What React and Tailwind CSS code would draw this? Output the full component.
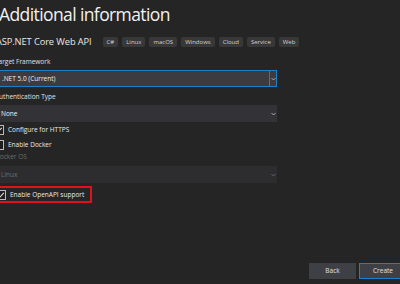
import React from "react";

const font = { fontFamily: '"Open Sans", "Noto Sans", sans-serif' };

function Tag({ children }) {
  return (
    <span className="h-[10px] px-[4px] rounded-[2px] bg-[#383838] text-[6px] leading-[10px] text-[#d0d0d0]">
      {children}
    </span>
  );
}

function Arrow({ dim }) {
  return (
    <svg width="5" height="4" viewBox="0 0 5 4">
      <path d="M0.5 1 L2.5 3 L4.5 1" fill="none" stroke={dim ? "#666" : "#aaa"} strokeWidth="1" />
    </svg>
  );
}

function Check({ checked }) {
  return (
    <span className="w-[10px] h-[10px] border border-[#bbb] bg-[#1e1e1e] flex items-center justify-center shrink-0">
      {checked && (
        <svg width="8" height="8" viewBox="0 0 8 8">
          <path d="M1.2 4.2 L3 6 L6.8 1.8" fill="none" stroke="#ddd" strokeWidth="1.1" />
        </svg>
      )}
    </span>
  );
}

export default function App() {
  return (
    <div className="w-[400px] h-[284px] bg-[#252526] overflow-hidden relative text-[#e0e0e0]" style={font}>
      <div className="-ml-[7px] flex flex-col">
        <div className="ml-[6px] mt-[1px] h-[26px] text-[17.5px] leading-[26px] tracking-[-0.6px] text-[#f2f2f2]">
          Additional information
        </div>
        <div className="mt-[9px] h-[12px] flex items-center gap-[4px]">
          <span className="ml-[3px] text-[9.3px] leading-[12px] tracking-[-0.1px] text-[#e8e8e8] mr-[7px]">ASP.NET Core Web API</span>
          <Tag>C#</Tag>
          <Tag>Linux</Tag>
          <Tag>macOS</Tag>
          <Tag>Windows</Tag>
          <Tag>Cloud</Tag>
          <Tag>Service</Tag>
          <Tag>Web</Tag>
        </div>
        <div className="mt-[9px] ml-[2px] text-[6.5px] leading-[10px] text-[#e0e0e0]">Target Framework</div>
        <div className="mt-[3px] w-[284px] h-[17px] border border-[#1b7fc9] bg-[#3b3b40] flex items-center">
          <span className="flex-1 pl-[8px] text-[6.5px] text-[#f0f0f0]">.NET 5.0 (Current)</span>
          <span className="w-[7px] h-full border-l border-[#1b7fc9] flex items-center justify-center">
            <Arrow />
          </span>
        </div>
        <div className="mt-[5px] ml-[2px] text-[6.5px] leading-[10px] text-[#e0e0e0]">Authentication Type</div>
        <div className="mt-[3px] w-[284px] h-[17px] bg-[#333337] flex items-center">
          <span className="flex-1 pl-[8px] text-[6.5px] text-[#f0f0f0]">None</span>
          <span className="w-[7px] flex items-center justify-center"><Arrow /></span>
        </div>
        <div className="mt-[3px] h-[10px] flex items-center gap-[4px] pl-[1px]">
          <Check checked />
          <span className="text-[6.5px] text-[#e8e8e8]">Configure for HTTPS</span>
        </div>
        <div className="mt-[5px] h-[10px] flex items-center gap-[4px] pl-[1px]">
          <Check />
          <span className="text-[6.5px] text-[#e8e8e8]">Enable Docker</span>
        </div>
        <div className="mt-[2px] ml-[2px] text-[6.5px] leading-[10px] text-[#6d6d6d]">Docker OS</div>
        <div className="mt-[4px] w-[284px] h-[17px] bg-[#2d2d30] flex items-center">
          <span className="flex-1 pl-[8px] text-[6.5px] text-[#6d6d6d]">Linux</span>
          <span className="w-[7px] flex items-center justify-center"><Arrow dim /></span>
        </div>
        <div className="mt-[3px] w-[99px] h-[17px] border-2 border-[#e0101f] flex items-center gap-[4px] pl-[1px]">
          <Check checked />
          <span className="text-[6.5px] text-[#e8e8e8]">Enable OpenAPI support</span>
        </div>
      </div>
      <div className="absolute right-[-7px] bottom-[5px] flex gap-[3px]">
        <button className="w-[47px] h-[16px] bg-[#3f3f46] text-[6.5px] text-[#e0e0e0]">Back</button>
        <button className="w-[48px] h-[16px] bg-[#3f3f46] border border-[#1b7fc9] text-[6.5px] text-[#e0e0e0]">Create</button>
      </div>
    </div>
  );
}
